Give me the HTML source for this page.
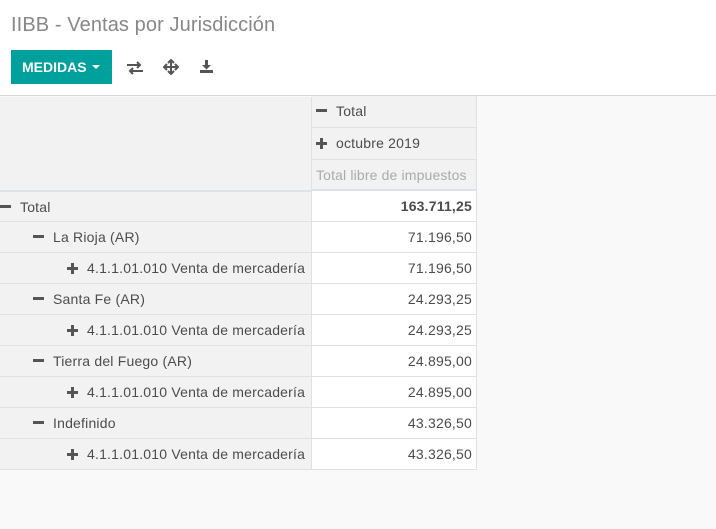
<!DOCTYPE html>
<html><head><meta charset="utf-8"><style>
*{margin:0;padding:0;box-sizing:border-box}
body{width:716px;height:529px;background:#f9f9f9;font-family:"Liberation Sans",sans-serif;font-size:14px;color:#4c4c4c;position:relative;overflow:hidden}
.hdr{position:absolute;left:0;top:0;width:716px;height:96px;background:#fff;border-bottom:1px solid #d8d8d8}
.title{position:absolute;left:11px;top:14px;font-size:20px;color:#888;letter-spacing:0.1px}
.btn{position:absolute;left:11px;top:50px;width:101px;height:34px;background:#00a09d;color:#fff;font-weight:bold;font-size:14px;line-height:34px;padding-left:11px}
.caret{display:inline-block;border-left:4px solid transparent;border-right:4px solid transparent;border-top:4px solid #fff;vertical-align:3px;margin-left:5px}
.c{position:absolute;height:31px;line-height:30px;border-bottom:1px solid #dee2e6;white-space:nowrap;letter-spacing:0.2px}
.l{left:0;width:312px;background:#f2f2f2;border-right:1px solid #dee2e6}
.v{left:312px;width:165px;background:#fff;text-align:right;padding-right:4px;border-right:1px solid #dee2e6}
.h{left:312px;width:165px;background:#f2f2f2;border-right:1px solid #dee2e6;padding-left:4px}
.mi{display:inline-block;width:11px;height:3px;background:#555;vertical-align:4px;margin-right:9px}
.pl{display:inline-block;width:11px;height:11px;position:relative;margin-right:9px;vertical-align:-1px}
.pl:before{content:"";position:absolute;left:0;top:4px;width:11px;height:3px;background:#555}
.pl:after{content:"";position:absolute;left:4px;top:0;width:3px;height:11px;background:#555}
</style></head><body>
<div class="hdr">
<div class="title">IIBB - Ventas por Jurisdicción</div>
<div class="btn">MEDIDAS<span class="caret"></span></div>
<svg style="position:absolute;left:126px;top:61px" width="18" height="14" viewBox="0 0 18 14"><path d="M1 4h13M11 1l3 3-3 3M17 10H4M7 7l-3 3 3 3" stroke="#555" stroke-width="2" fill="none"/></svg>
<svg style="position:absolute;left:163px;top:59px" width="16" height="16" viewBox="0 0 16 16"><path d="M8 1v14M1 8h14M5 4l3-3 3 3M5 12l3 3 3-3M4 5L1 8l3 3M12 5l3 3-3 3" stroke="#555" stroke-width="2" fill="none"/></svg>
<svg style="position:absolute;left:199px;top:59px" width="15" height="15" viewBox="0 0 15 15"><path d="M6 1h3v5h3l-4.5 4.5L3 6h3z" fill="#555"/><rect x="1" y="11" width="13" height="3" fill="#555"/></svg>
</div>
<div class="c l" style="top:97px;height:94px"></div>
<div class="c h" style="top:96px;height:32px;line-height:31px"><span class="mi"></span>Total</div>
<div class="c h" style="top:128px;height:32px;line-height:31px"><span class="pl"></span>octubre 2019</div>
<div class="c h" style="top:160px;color:#aaa;border-bottom:2px solid #dee2e6;height:31px;letter-spacing:0.15px">Total libre de impuestos</div>
<div class="c l" style="top:191px;border-top:1px solid #dee2e6"><span class="mi"></span>Total</div><div class="c v" style="top:191px;font-weight:bold">163.711,25</div>
<div class="c l" style="top:222px;padding-left:33px"><span class="mi"></span>La Rioja (AR)</div><div class="c v" style="top:222px">71.196,50</div>
<div class="c l" style="top:253px;padding-left:67px"><span class="pl"></span>4.1.1.01.010 Venta de mercadería</div><div class="c v" style="top:253px">71.196,50</div>
<div class="c l" style="top:284px;padding-left:33px"><span class="mi"></span>Santa Fe (AR)</div><div class="c v" style="top:284px">24.293,25</div>
<div class="c l" style="top:315px;padding-left:67px"><span class="pl"></span>4.1.1.01.010 Venta de mercadería</div><div class="c v" style="top:315px">24.293,25</div>
<div class="c l" style="top:346px;padding-left:33px"><span class="mi"></span>Tierra del Fuego (AR)</div><div class="c v" style="top:346px">24.895,00</div>
<div class="c l" style="top:377px;padding-left:67px"><span class="pl"></span>4.1.1.01.010 Venta de mercadería</div><div class="c v" style="top:377px">24.895,00</div>
<div class="c l" style="top:408px;padding-left:33px"><span class="mi"></span>Indefinido</div><div class="c v" style="top:408px">43.326,50</div>
<div class="c l" style="top:439px;padding-left:67px"><span class="pl"></span>4.1.1.01.010 Venta de mercadería</div><div class="c v" style="top:439px">43.326,50</div>
</body></html>
